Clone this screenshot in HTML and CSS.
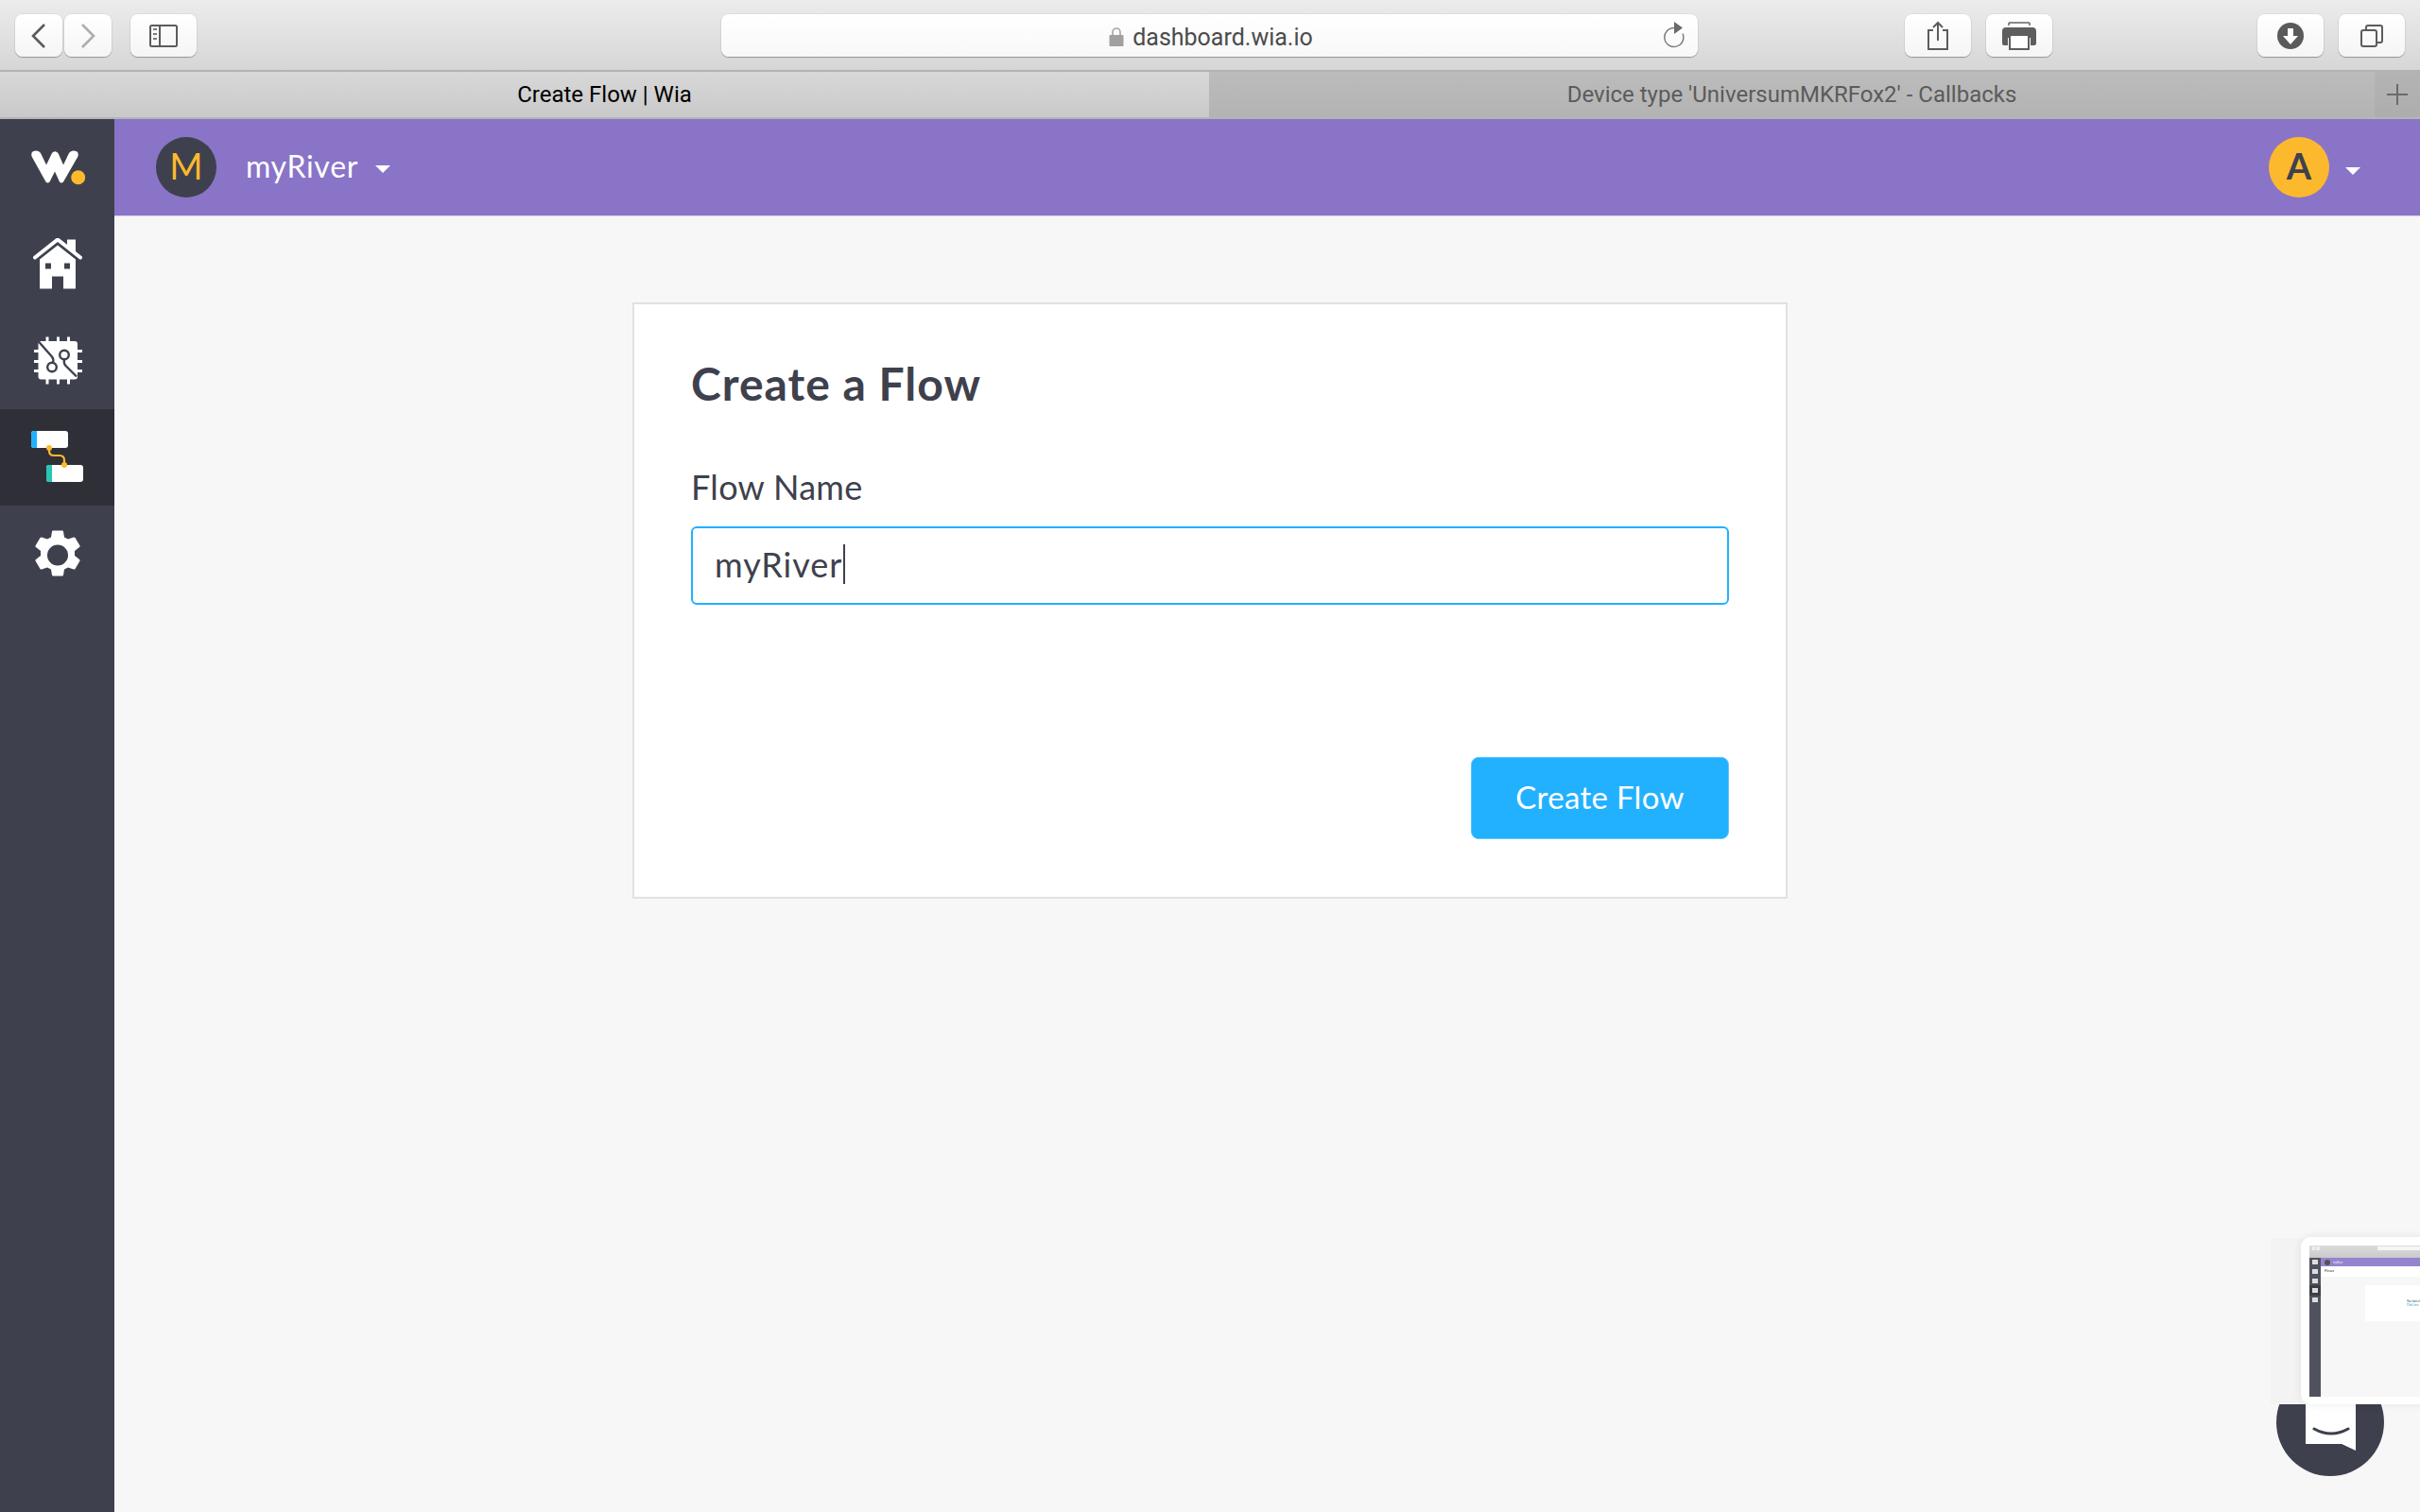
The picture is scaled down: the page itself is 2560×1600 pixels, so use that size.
FILE: index.html
```html
<!DOCTYPE html>
<html lang="en">
<head>
<meta charset="utf-8">
<title>Create Flow | Wia</title>
<link rel="stylesheet" href="styles.css">
</head>
<body>
<div class="toolbar">
  <div class="tb-btn nav-btn"><svg width="18" height="26" viewBox="0 0 18 26"><path d="M15 1 3 13l12 12" fill="none" stroke="#5a5a5a" stroke-width="2.6"/></svg></div>
  <div class="tb-btn nav-btn fwd"><svg width="18" height="26" viewBox="0 0 18 26"><path d="m3 1 12 12L3 25" fill="none" stroke="#adadad" stroke-width="2.6"/></svg></div>
  <div class="tb-btn side-btn"><svg width="30" height="24" viewBox="0 0 30 24"><rect x="1" y="1" width="28" height="22" rx="1.5" fill="none" stroke="#5c5c5c" stroke-width="2"/><path d="M11 1v22" stroke="#5c5c5c" stroke-width="2"/><path d="M4 4h4v2H4zM4 9h4v2H4zM4 14h4v2H4z" fill="#7b7b7b"/></svg></div>
  <div class="url">
    <svg class="lock" width="16" height="22" viewBox="0 0 16 22"><path d="M4 10V6a4 4 0 0 1 8 0v4" fill="none" stroke="#a5a5a5" stroke-width="1.6"/><rect x="0.5" y="9" width="15" height="12" rx="1" fill="#a0a0a0"/></svg>
    <span class="url-text">dashboard.wia.io</span>
    <svg class="reload" width="24" height="28" viewBox="0 0 24 28"><path d="M12 6.500a10 10 0 1 0 9 6" fill="none" stroke="#7c7c7c" stroke-width="1.5"/><path d="M12 0v13l9-6.500z" fill="#6a6a6a"/></svg>
  </div>
  <div class="tb-btn act-btn share"><svg width="24" height="32" viewBox="0 0 24 32"><path d="M7 10H2v20h20V10h-5" fill="none" stroke="#5c5c5c" stroke-width="2"/><path d="M12 21V2M7 7l5-5 5 5" fill="none" stroke="#5c5c5c" stroke-width="2"/></svg></div>
  <div class="tb-btn act-btn"><svg width="36" height="30" viewBox="0 0 36 30"><path d="M7 1h22M7 1v3M29 1v3" fill="none" stroke="#666" stroke-width="1.500"/><path d="M4 6h28a4 4 0 0 1 4 4v13a2 2 0 0 1-2 2h-4v-8H6v8H2a2 2 0 0 1-2-2V10a4 4 0 0 1 4-4z" fill="#5e5e5e"/><rect x="8" y="14" width="20" height="15" fill="#fff" stroke="#5e5e5e" stroke-width="2"/></svg></div>
  <div class="tb-btn act-btn download"><svg width="28" height="28" viewBox="0 0 28 28"><circle cx="14" cy="14" r="14" fill="#5a5a5a"/><path d="M11 6h6v8h5l-8 9-8-9h5z" fill="#fff"/></svg></div>
  <div class="tb-btn act-btn"><svg width="24" height="24" viewBox="0 0 24 24"><rect x="1" y="6" width="16" height="17" rx="2" fill="none" stroke="#5c5c5c" stroke-width="2"/><path d="M6 6V3a2 2 0 0 1 2-2h13a2 2 0 0 1 2 2v14a2 2 0 0 1-2 2h-4" fill="none" stroke="#5c5c5c" stroke-width="2"/></svg></div>
</div>
<div class="tabs">
  <div class="tab active">Create Flow | Wia</div>
  <div class="tab">Device type 'UniversumMKRFox2' - Callbacks</div>
  <div class="tab-add"><svg width="22" height="22" viewBox="0 0 22 22"><path d="M11 0v22M0 11h22" stroke="#6a6a6a" stroke-width="2"/></svg></div>
</div>
<div class="app">
  <nav class="sidebar">
    <a class="side-item logo"><svg width="80" height="60" viewBox="0 2.500 80 60"><path d="M12.500 20Q11 14 17 14q4 0 5.500 3.500L28 29l6-12.500q3-3.500 6.500 0L46 29l5.500-11.500Q53 14 57 14q6 0 4.500 6L46 47q-2 2-4 0l-5-11-5.500 11q-2 2-4 0z" fill="#fff"/><circle cx="61.700" cy="42.300" r="7.500" fill="#fdb92d"/></svg></a>
    <a class="side-item"><svg width="52" height="56" viewBox="0 1.500 52 56"><path d="M2 22 26 3l24 19" fill="none" stroke="#fff" stroke-width="4" stroke-linecap="round"/><path d="M36 3h9v14l-9-7z" fill="#fff"/><path fill-rule="evenodd" d="M26 9 45 24v31H32V42H20v13H7V24zM13 28v6h6v-6zM33 28v6h6v-6z" fill="#fff"/></svg></a>
    <a class="side-item"><svg width="80" height="80" viewBox="0 1.500 80 80"><path d="M29 16v8M40.500 16v8M51.500 16v8M29 60v6M40.500 60v6M51.500 60v6M15 31h8M15 42h8M15 52h8M58 31h8M58 42h8M58 52h8" stroke="#fff" stroke-width="3"/><rect x="19.500" y="20.500" width="41.500" height="40.500" rx="3" fill="#fff"/><path d="M19 20l15 17q2 2.500 1 6.500M47 40q-1 4 1.500 6.500L60 58" fill="none" stroke="#3e414d" stroke-width="2.400"/><circle cx="34" cy="48" r="4.800" fill="#fff" stroke="#3e414d" stroke-width="2.400"/><circle cx="47" cy="35" r="4.800" fill="#fff" stroke="#3e414d" stroke-width="2.400"/></svg></a>
    <a class="side-item current"><svg width="56" height="56" viewBox="0 0 56 56"><rect x="0" y="0" width="39" height="18" rx="3" fill="#fff"/><path d="M6 0H3a3 3 0 0 0-3 3v12a3 3 0 0 0 3 3h3z" fill="#22b1ff"/><rect x="16" y="36" width="39" height="18" rx="3" fill="#fff"/><path d="M22 36h-3a3 3 0 0 0-3 3v12a3 3 0 0 0 3 3h3z" fill="#26c6b2"/><path d="M19 18v3q0 5 5 5h6q5 0 5 5v5" fill="none" stroke="#fdb92d" stroke-width="2.200"/><circle cx="19" cy="18" r="3" fill="#fdb92d"/><circle cx="35" cy="36" r="3" fill="#fdb92d"/></svg></a>
    <a class="side-item"><svg width="50" height="52" viewBox="0 -1.500 50 52"><path fill-rule="evenodd" fill="#fff" d="M19 1q0-1 1-1h10q1 0 1 1l1 6 4 2 6-2q1 0 1.500.5l5 8.500q.5 1-.5 1.500l-5 4v5l5 4q1 .5.500 1.500l-5 8.500q-.5.5-1.500.5l-6-2-4 2-1 6q0 1-1 1H20q-1 0-1-1l-1-6-4-2-6 2q-1 0-1.500-.5l-5-8.500q-.5-1 .5-1.500l5-4v-5l-5-4q-1-.5-.5-1.500l5-8.500q.5-.5 1.500-.5l6 2 4-2zM25 15a11 11 0 1 0 0 22 11 11 0 0 0 0-22z"/></svg></a>
  </nav>
  <div class="content">
    <header class="topbar">
      <div class="org-avatar">M</div>
      <span class="org-name">myRiver</span>
      <i class="caret"></i>
      <div class="user-avatar">A</div>
      <i class="caret user-caret"></i>
    </header>
    <main class="main">
      <section class="card">
        <h1 class="title">Create a Flow</h1>
        <label class="label">Flow Name</label>
        <div class="field"><span>myRiver</span><i class="text-caret"></i></div>
        <div class="actions"><button class="submit">Create Flow</button></div>
      </section>
    </main>
  </div>
</div>
<div class="chat"><div class="bubble"><svg width="40" height="10" viewBox="0 0 40 10"><path d="M2 2q18 10 36 0" fill="none" stroke="#3e414d" stroke-width="3" stroke-linecap="round"/></svg></div></div>
<div class="peek-back"></div>
<div class="peek">
  <div class="mini">
    <div class="mini-chrome"><i class="mini-btn"></i><i class="mini-btn"></i><i class="mini-url"></i></div>
    <div class="mini-body">
      <div class="mini-side"><b></b><b></b><b></b><b class="on"></b><b></b></div>
      <div class="mini-main">
        <div class="mini-top"><i class="mini-dot"></i><span>myRiver</span></div>
        <div class="mini-head">Flows</div>
        <div class="mini-card"><span>You haven't</span><span class="mini-link">Click here</span></div>
      </div>
    </div>
  </div>
</div>
</body>
</html>
```
FILE: styles.css
```css
* { box-sizing: border-box; }
html, body { margin: 0; height: 100%; }
body {
  width: 2560px; height: 1600px; overflow: hidden; position: relative;
  display: flex; flex-direction: column;
  font-family: "Lato", "Liberation Sans", sans-serif; background: #f7f7f7;
}
.toolbar {
  height: 76px; flex: none; display: flex; align-items: flex-start; padding: 15px 16px 0;
  background: linear-gradient(#ececec, #d6d6d6); border-bottom: 2px solid #b3b3b3;
}
.tb-btn {
  height: 45px; background: linear-gradient(#fff, #f5f5f5); border-radius: 8px;
  box-shadow: 0 1px 1px rgba(0,0,0,.3), 0 0 0 1px rgba(0,0,0,.04);
  display: flex; align-items: center; justify-content: center; flex: none;
}
.nav-btn { width: 50px; }
.fwd { margin-left: 2px; }
.side-btn { width: 70px; margin-left: 20px; }
.act-btn { width: 70px; margin-left: 16px; }
.share { margin-left: 219px; }
.download { margin-left: 217px; }
.url {
  width: 1033px; height: 45px; margin-left: 555px; flex: none; position: relative;
  background: linear-gradient(#fff, #f8f8f8); border-radius: 8px;
  box-shadow: 0 1px 1px rgba(0,0,0,.3), 0 0 0 1px rgba(0,0,0,.04);
  display: flex; align-items: center; justify-content: center; gap: 9px; padding: 3px 0 0 3px;
  font: 25px "Roboto", "Liberation Sans", sans-serif; color: #4b4b4b;
}
.reload { position: absolute; right: 13px; top: 8px; }
.tabs {
  height: 50px; flex: none; display: flex;
  font: 24px "Roboto", "Liberation Sans", sans-serif;
  border-bottom: 2px solid #b5b5b5;
}
.tab {
  flex: none; width: 1233px; display: flex; align-items: center; justify-content: center;
  background: linear-gradient(#bcbcbc, #b3b3b3); color: #5b5b5b;
}
.tab.active {
  width: 1279px; background: linear-gradient(#d8d8d8, #c9c9c9); color: #000;
}
.tab-add {
  flex: 1; background: linear-gradient(#b4b4b4, #adadad);
  display: flex; align-items: center; justify-content: center;
}
.app { flex: 1; display: flex; min-height: 0; }
.sidebar { width: 121px; flex: none; background: #3e414d; display: flex; flex-direction: column; }
.side-item { height: 102px; display: flex; align-items: center; justify-content: center; flex: none; }
.side-item.logo { height: 103px; }
.side-item.current { background: #2f2f38; }
.content { flex: 1; min-width: 0; display: flex; flex-direction: column; }
.topbar {
  height: 103px; flex: none; background: #8974c8; border-bottom: 1px solid #d9d3ee;
  display: flex; align-items: center; padding-left: 44px; color: #fff;
}
.org-avatar, .user-avatar {
  width: 64px; height: 64px; border-radius: 50%; flex: none; padding-bottom: 4px;
  display: flex; align-items: center; justify-content: center; font-size: 38px;
}
.org-avatar { background: #3e414d; color: #fdb92d; }
.user-avatar { background: #fdb92d; color: #3e414d; margin-left: auto; font-weight: 700; }
.org-name { font-size: 32px; margin: 0 0 3px 31px; letter-spacing: .7px; }
.caret {
  width: 0; height: 0; border: 8px solid transparent; border-bottom: 0; border-top-color: #fff;
  margin-left: 18px; margin-top: 4px; flex: none;
}
.user-caret { margin: 8px 63px 0 17px; }
.main { flex: 1; padding: 91px 121px 0 0; display: flex; justify-content: center; align-items: flex-start; }
.card {
  width: 1222px; height: 631px; background: #fff; border: 2px solid #e1e1e1;
  padding: 56px 60px 0; display: flex; flex-direction: column; color: #3e414d;
}
.title { margin: 0; font-size: 48px; line-height: 56px; font-weight: 700; letter-spacing: 1px; }
.label { margin-top: 61px; font-size: 36px; line-height: 40px; letter-spacing: .3px; }
.field {
  margin-top: 22px; height: 83px; border: 2px solid #22b1ff; border-radius: 6px;
  display: flex; align-items: center; padding: 0 0 4px 23px; font-size: 36px; letter-spacing: 1px;
}
.text-caret { width: 2px; height: 42px; background: #3e414d; margin-left: 1px; }
.actions { margin-top: 161px; display: flex; justify-content: flex-end; }
.submit {
  width: 273px; height: 87px; background: #22b1ff; color: #fff; border: 1px solid #5cc6ff;
  border-radius: 8px; font: 33px "Lato", sans-serif; padding: 0 0 3px; letter-spacing: .3px;
}
.chat {
  position: absolute; left: 2408px; top: 1448px; width: 114px; height: 114px;
  border-radius: 50%; background: #3e414d;
}
.bubble {
  position: absolute; left: 31px; top: 0; width: 53px; height: 87px; background: #fff;
  clip-path: polygon(0 0, 100% 0, 100% 100%, 72% 92%, 0 92%);
  display: flex; justify-content: center; padding-top: 62px;
}
.peek-back {
  position: absolute; left: 2402px; top: 1310px; width: 40px; height: 176px;
  background: #f3f3f3;
}
.peek {
  position: absolute; left: 2434px; top: 1309px; width: 140px; height: 177px;
  background: #fff; border-radius: 10px; padding: 9px 0 8px 9px;
  box-shadow: 0 0 10px rgba(0,0,0,.08);
}
.mini { height: 160px; display: flex; flex-direction: column; overflow: hidden; background: #f7f7f7; filter: blur(.4px); }
.mini-chrome {
  height: 13px; flex: none; background: linear-gradient(#dcdcdc, #c9c9c9);
  display: flex; align-items: flex-start; gap: 1px; padding: 1px 0 0 3px;
}
.mini-btn { width: 4px; height: 4px; background: #eee; }
.mini-url { width: 70px; height: 4px; background: #f5f5f5; margin-left: 60px; }
.mini-body { flex: 1; display: flex; }
.mini-side {
  width: 12px; flex: none; background: #50535f; display: flex; flex-direction: column;
  align-items: center; gap: 5px; padding-top: 2px;
}
.mini-side b { width: 6px; height: 5px; background: #ddd; }
.mini-side b.on { outline: 3px solid #3c3d47; }
.mini-main { flex: 1; min-width: 0; font: 3px "Lato", sans-serif; color: #444; }
.mini-top {
  height: 9px; background: #9683d0; display: flex; align-items: center; gap: 3px;
  padding-left: 4px; color: #eee;
}
.mini-dot { width: 6px; height: 6px; border-radius: 50%; background: #555; }
.mini-head { height: 11px; background: #fff; padding-left: 4px; line-height: 9px; font-size: 4px; }
.mini-card {
  margin: 9px 0 0 47px; height: 38px; background: #fff; display: flex; flex-direction: column;
  padding: 15px 0 0 44px; white-space: nowrap;
}
.mini-link { color: #2a9fdc; }
```
